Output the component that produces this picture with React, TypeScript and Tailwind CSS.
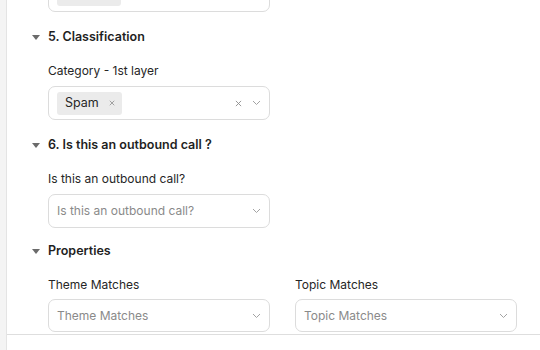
import React from "react";

const font = { fontFamily: "Inter, 'Noto Sans', sans-serif" };

const Chevron = () => (
  <svg width="9" height="6" viewBox="0 0 9 6" className="text-[#a3a3a3]">
    <path d="M1 1l3.5 3.5L8 1" fill="none" stroke="currentColor" strokeWidth="1" />
  </svg>
);

const Cross = ({ size = 8, className = "" }: { size?: number; className?: string }) => (
  <svg width={size} height={size} viewBox="0 0 8 8" className={className}>
    <path d="M1 1l6 6M7 1L1 7" stroke="currentColor" strokeWidth="1" />
  </svg>
);

const Section = ({ title }: { title: string }) => (
  <div className="flex items-center h-[20px] -ml-[16px]">
    <svg width="8" height="5" viewBox="0 0 8 5" className="mr-[8px] text-[#6b6b6b]">
      <path d="M0 0h8L4 5z" fill="currentColor" />
    </svg>
    <span className="text-[12.5px] font-semibold text-[#1f1f1f]">{title}</span>
  </div>
);

const Label = ({ text, tight = false }: { text: string; tight?: boolean }) => (
  <div className={`text-[12px] text-[#262626] h-[16px] leading-[16px] ${tight ? "mb-[6px]" : "mb-[7px]"}`}>
    {text}
  </div>
);

const Select = ({ placeholder, short = false }: { placeholder: string; short?: boolean }) => (
  <div
    className={`w-[222px] ${short ? "h-[33px]" : "h-[34px]"} border border-[#dcdcdc] rounded-[7px] flex items-center justify-between pl-[8px] pr-[8px]`}
  >
    <span className="text-[12px] text-[#8a8a8a]">{placeholder}</span>
    <Chevron />
  </div>
);

export default function App() {
  return (
    <div className="w-[540px] h-[350px] flex bg-white overflow-hidden" style={font}>
      <div className="w-[7px] h-full bg-[#f4f4f4] border-r border-[#e4e4e4]" />
      <div className="flex-1 flex flex-col">
        <div className="h-[335px] border-b border-[#dedede] overflow-hidden">
          <div className="pl-[41px] -mt-[22px] flex flex-col">
            <div className="w-[222px] h-[34px] border border-[#dcdcdc] rounded-[7px] flex items-center px-[8px]">
              <div className="w-[64px] h-[22px] bg-[#ebebeb] rounded-[3px]" />
            </div>
            <div className="mt-[15px]">
              <Section title="5. Classification" />
            </div>
            <div className="mt-[16px]">
              <Label text="Category - 1st layer" />
              <div className="w-[222px] h-[34px] border border-[#dcdcdc] rounded-[7px] flex items-center justify-between pl-[8px] pr-[8px]">
                <div className="h-[23px] w-[65px] bg-[#ebebeb] rounded-[3px] flex items-center pl-[8px] gap-[10px]">
                  <span className="text-[12.5px] text-[#262626]">Spam</span>
                  <Cross size={6} className="text-[#888]" />
                </div>
                <div className="flex items-center gap-[10px]">
                  <Cross size={7} className="text-[#8a8a8a]" />
                  <Chevron />
                </div>
              </div>
            </div>
            <div className="mt-[15px]">
              <Section title="6. Is this an outbound call ?" />
            </div>
            <div className="mt-[16px]">
              <Label text="Is this an outbound call?" />
              <Select placeholder="Is this an outbound call?" />
            </div>
            <div className="mt-[13px]">
              <Section title="Properties" />
            </div>
            <div className="mt-[16px] flex gap-[25px]">
              <div>
                <Label text="Theme Matches" tight />
                <Select placeholder="Theme Matches" short />
              </div>
              <div>
                <Label text="Topic Matches" tight />
                <Select placeholder="Topic Matches" short />
              </div>
            </div>
          </div>
        </div>
      </div>
    </div>
  );
}
